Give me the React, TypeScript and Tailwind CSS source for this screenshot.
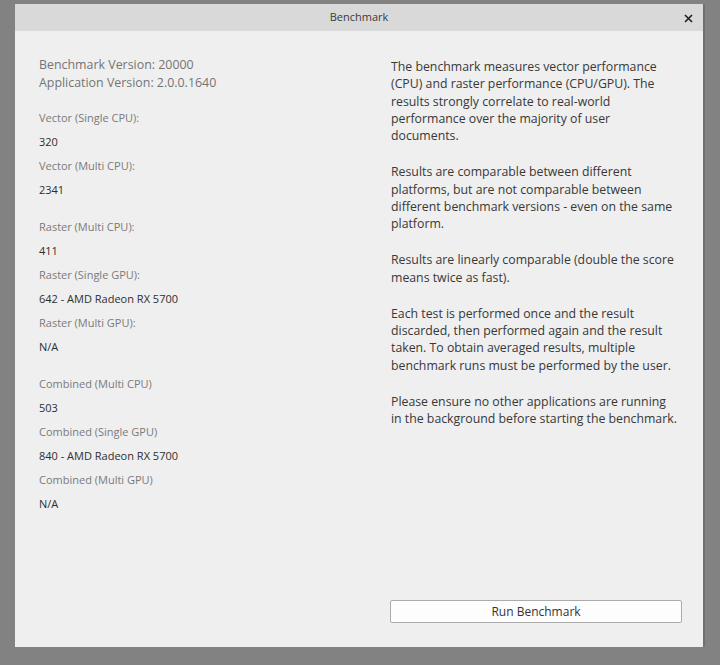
import React from 'react';

const font = { fontFamily: '"Open Sans", "Noto Sans", sans-serif' };

const groups: { label: string; value: string }[][] = [
  [
    { label: 'Vector (Single CPU):', value: '320' },
    { label: 'Vector (Multi CPU):', value: '2341' },
  ],
  [
    { label: 'Raster (Multi CPU):', value: '411' },
    { label: 'Raster (Single GPU):', value: '642 - AMD Radeon RX 5700' },
    { label: 'Raster (Multi GPU):', value: 'N/A' },
  ],
  [
    { label: 'Combined (Multi CPU)', value: '503' },
    { label: 'Combined (Single GPU)', value: '840 - AMD Radeon RX 5700' },
    { label: 'Combined (Multi GPU)', value: 'N/A' },
  ],
];

const paragraphs: string[][] = [
  [
    'The benchmark measures vector performance',
    '(CPU) and raster performance (CPU/GPU). The',
    'results strongly correlate to real-world',
    'performance over the majority of user',
    'documents.',
  ],
  [
    'Results are comparable between different',
    'platforms, but are not comparable between',
    'different benchmark versions - even on the same',
    'platform.',
  ],
  ['Results are linearly comparable (double the score', 'means twice as fast).'],
  [
    'Each test is performed once and the result',
    'discarded, then performed again and the result',
    'taken. To obtain averaged results, multiple',
    'benchmark runs must be performed by the user.',
  ],
  ['Please ensure no other applications are running', 'in the background before starting the benchmark.'],
];

export default function App() {
  return (
    <div className="w-[720px] h-[665px] bg-[#828282] pt-[4px] pl-[15px] overflow-hidden" style={font}>
      <div className="w-[688px] h-[643px] bg-[#efefef] flex flex-col shadow-[2px_0_0_#6f6f6f]">
        {/* title bar */}
        <div className="h-[27px] bg-[#d9d9d9] flex items-center relative shrink-0">
          <div className="flex-1 text-center text-[11px] text-[#3a3a3a]">Benchmark</div>
          <button className="absolute right-[9px] top-[8px] w-[12px] h-[12px] flex items-center justify-center">
            <svg width="9" height="9" viewBox="0 0 9 9">
              <path d="M1 1 L8 8 M8 1 L1 8" stroke="#1f1f1f" strokeWidth="1.6" />
            </svg>
          </button>
        </div>

        <div className="flex-1 flex pl-[24px] pt-[25px] pb-[24px]">
          {/* results */}
          <div className="flex-1">
            <div className="text-[12.4px] leading-[18px] text-[#747474]">
              <div>Benchmark Version: 20000</div>
              <div>Application Version: 2.0.0.1640</div>
            </div>
            <div className="mt-[14px] flex flex-col gap-[13px]">
              {groups.map((g, i) => (
                <div key={i}>
                  {g.map((r) => (
                    <div key={r.label}>
                      <div className="h-[24px] leading-[24px] text-[11px] text-[#7a7a7a]">{r.label}</div>
                      <div className="h-[24px] leading-[24px] text-[11px] text-[#2e2e2e]">{r.value}</div>
                    </div>
                  ))}
                </div>
              ))}
            </div>
          </div>

          {/* description + action */}
          <div className="w-[313px] pr-[21px] flex flex-col">
            <div className="pt-[2px] pl-[1px] text-[12.3px] leading-[17.25px] text-[#383838] flex flex-col gap-[19px]">
              {paragraphs.map((p, i) => (
                <p key={i} className="whitespace-nowrap">
                  {p.map((line) => (
                    <span key={line} className="block">
                      {line}
                    </span>
                  ))}
                </p>
              ))}
            </div>
            <button className="mt-auto h-[23px] w-[292px] bg-[#fdfdfd] border border-[#ababab] rounded-[2px] text-[12px] text-[#333]">
              Run Benchmark
            </button>
          </div>
        </div>
      </div>
    </div>
  );
}
